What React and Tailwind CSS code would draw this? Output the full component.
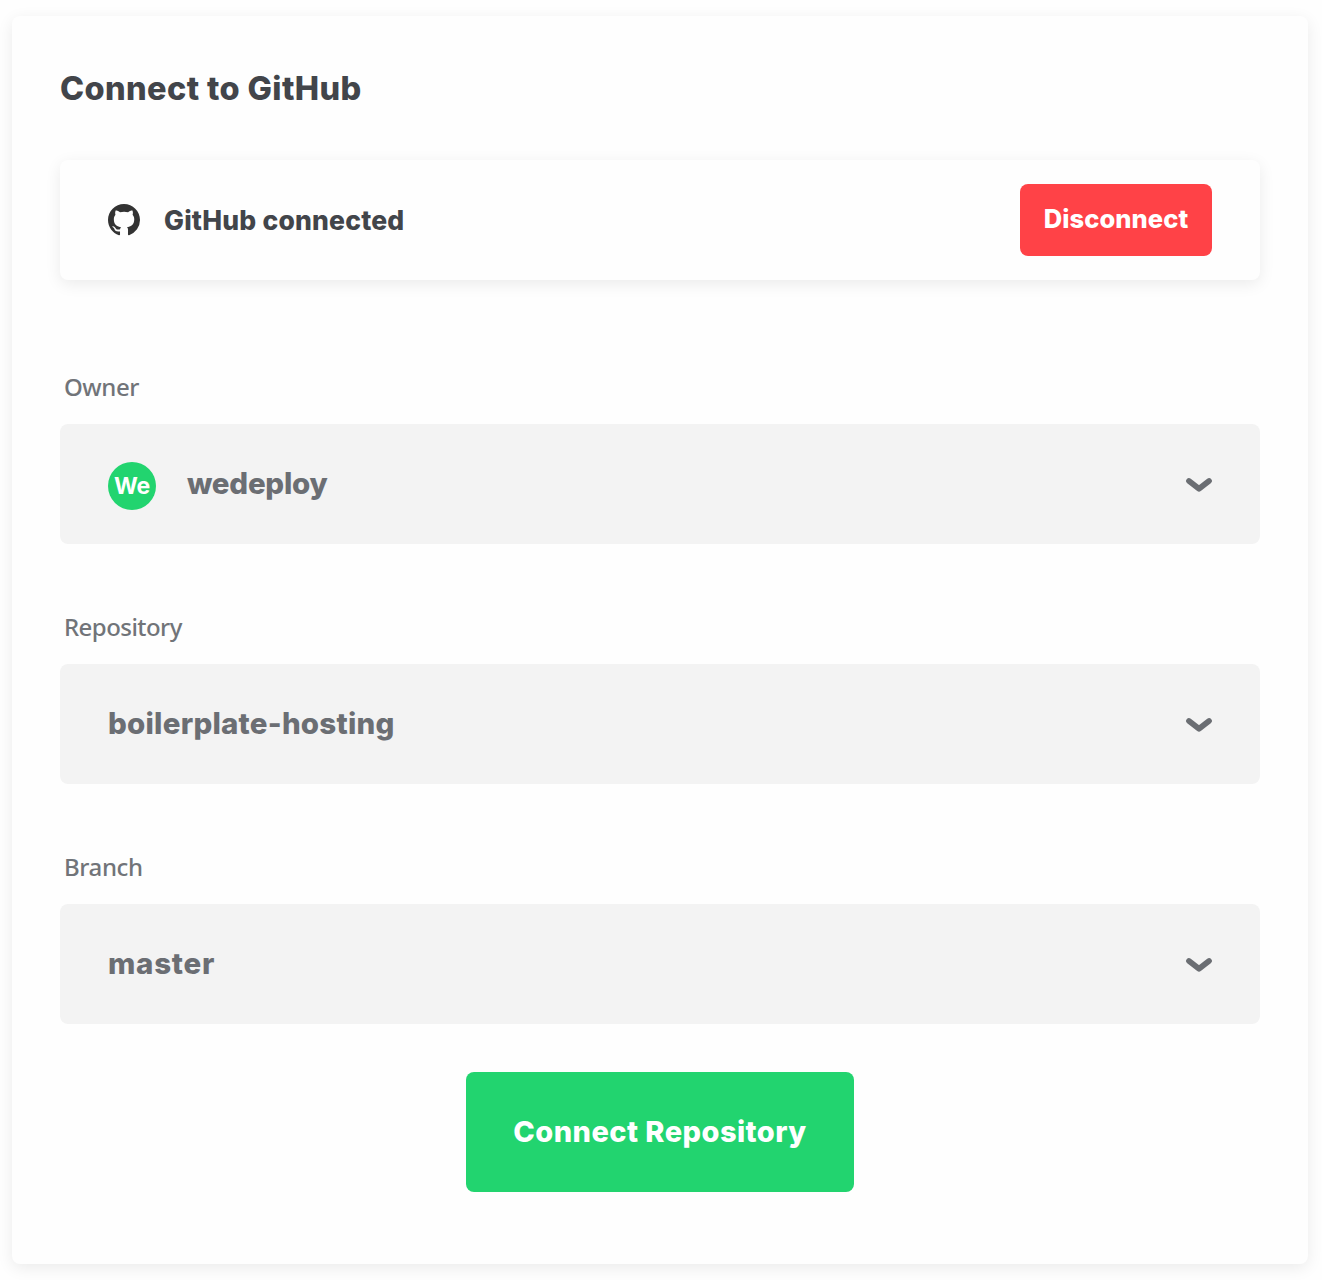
function GitHubMark() {
  return (
    <svg viewBox="0 0 16 16" className="size-8 shrink-0 fill-[#333333]" aria-hidden="true">
      <path d="M8 0C3.58 0 0 3.58 0 8c0 3.54 2.29 6.53 5.47 7.59.4.07.55-.17.55-.38 0-.19-.01-.82-.01-1.49-2.01.37-2.53-.49-2.69-.94-.09-.23-.48-.94-.82-1.13-.28-.15-.68-.52-.01-.53.63-.01 1.08.58 1.23.82.72 1.21 1.87.87 2.33.66.07-.52.28-.87.51-1.07-1.78-.2-3.64-.89-3.64-3.95 0-.87.31-1.59.82-2.15-.08-.2-.36-1.02.08-2.12 0 0 .67-.21 2.2.82.64-.18 1.32-.27 2-.27s1.36.09 2 .27c1.53-1.04 2.2-.82 2.2-.82.44 1.1.16 1.92.08 2.12.51.56.82 1.27.82 2.15 0 3.07-1.87 3.75-3.65 3.95.29.25.54.73.54 1.48 0 1.07-.01 1.93-.01 2.2 0 .21.15.46.55.38A8.01 8.01 0 0 0 16 8c0-4.42-3.58-8-8-8z" />
    </svg>
  );
}

function Chevron() {
  return (
    <svg viewBox="0 0 28 16" className="h-4 w-7 shrink-0" fill="none" aria-hidden="true">
      <path d="M4 5 14 12.8 24 5" stroke="#6b6e73" strokeWidth="5.8" strokeLinecap="round" strokeLinejoin="round" />
    </svg>
  );
}

function Field({ label, value, labelSpacing, spacing, avatar }) {
  return (
    <div className="h-60">
      <div className={"flex h-[62px] items-start pl-1 font-['Noto_Sans',sans-serif] text-[24px] leading-[50px] font-medium text-[#717479] " + labelSpacing}>
        {label}
      </div>
      <button
        type="button"
        className="flex h-[120px] w-full items-center rounded-lg bg-[#f3f3f3] pr-[47px] pl-12 text-left text-[29.5px] leading-9 font-extrabold text-[#6b6e73]"
      >
        {avatar && (
          <span className="mt-1 mr-[31px] flex size-12 items-center justify-center rounded-full bg-[#22d46f] text-[23px] font-bold tracking-[-0.3px] text-white">
            {avatar}
          </span>
        )}
        <span className={"mb-0.5 grow " + spacing}>{value}</span>
        <Chevron />
      </button>
    </div>
  );
}

export default function App() {
  return (
    <main className="h-[1280px] overflow-hidden bg-[#fefefe] pt-4 pr-3.5 pl-3 font-['Inter',sans-serif]">
      <section className="flex h-[1248px] flex-col rounded-lg bg-[#fefefe] px-12 shadow-[0_4px_16px_rgba(0,0,0,0.08)]">
        <h1 className="h-36 pt-[49px] text-[32.5px] leading-[48px] font-extrabold tracking-[0.38px] text-[#42454a]">
          Connect to GitHub
        </h1>
        <div className="flex h-[120px] items-center rounded-lg bg-[#fefefe] px-12 shadow-[0_4px_16px_rgba(0,0,0,0.08)]">
          <GitHubMark />
          <span className="ml-6 grow text-[26.5px] leading-8 font-extrabold tracking-[0.2px] text-[#42454a]">
            GitHub connected
          </span>
          <button
            type="button"
            className="h-[72px] w-48 rounded-lg bg-[#ff4247] pb-0.5 text-[25.5px] font-extrabold tracking-[0.05px] text-white"
          >
            Disconnect
          </button>
        </div>
        <div className="mt-[82px]">
          <Field label="Owner" value="wedeploy" labelSpacing="tracking-[-0.45px]" spacing="tracking-[-0.25px]" avatar="We" />
          <Field label="Repository" value="boilerplate-hosting" labelSpacing="tracking-[-0.55px]" spacing="tracking-[0.23px]" />
          <Field label="Branch" value="master" labelSpacing="tracking-[-0.4px]" spacing="tracking-[0.75px]" />
        </div>
        <button
          type="button"
          className="-mt-[10px] h-[120px] w-[388px] self-center rounded-lg bg-[#22d46f] text-[29px] font-extrabold tracking-[0.45px] text-white"
        >
          Connect Repository
        </button>
      </section>
    </main>
  );
}
